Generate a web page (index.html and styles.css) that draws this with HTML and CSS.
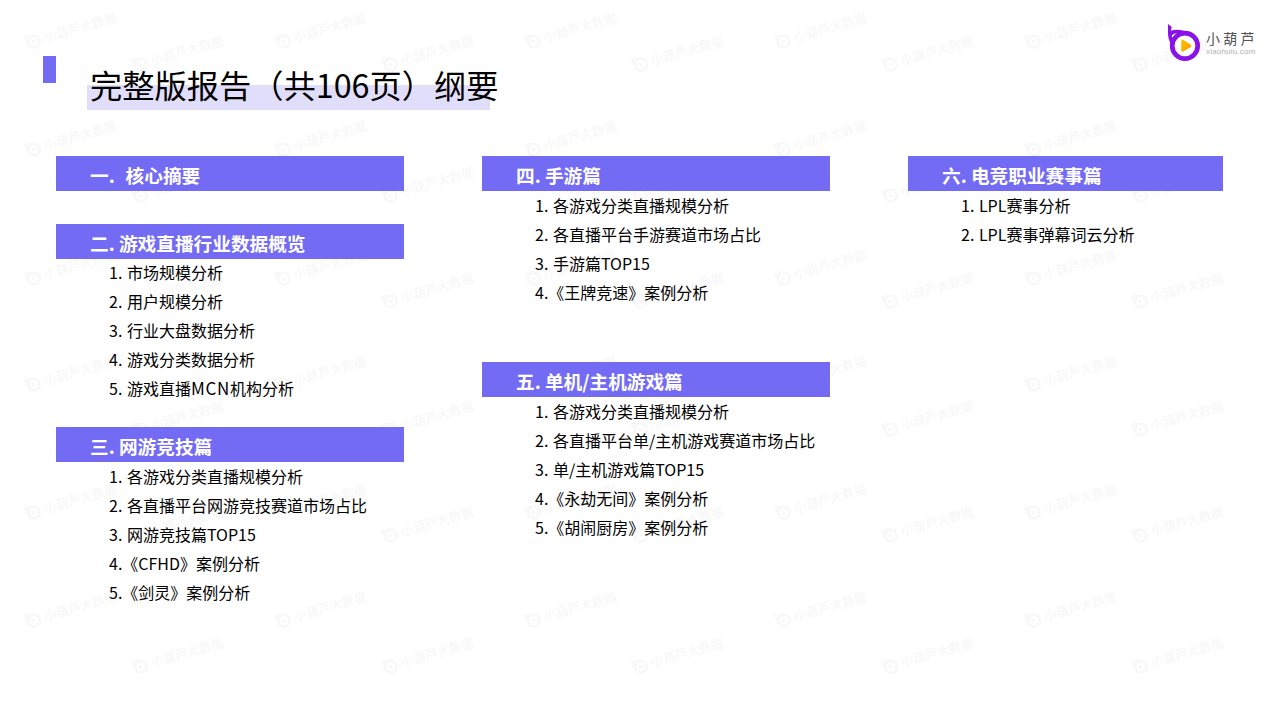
FILE: index.html
```html
<!DOCTYPE html>
<html lang="zh-CN">
<head>
<meta charset="utf-8">
<title>完整版报告纲要</title>
<link rel="stylesheet" href="styles.css">
</head>
<body>
<svg class="defs" width="0" height="0" aria-hidden="true">
  <symbol id="wm" viewBox="0 0 20 20">
    <path d="M2 2 L2.5 6 Q4 9 4.5 11" fill="none" stroke="currentColor" stroke-width="2.4"/>
    <path d="M2.5 4 Q6 2 10 4" fill="none" stroke="currentColor" stroke-width="2"/>
    <circle cx="10" cy="11" r="6.6" fill="none" stroke="currentColor" stroke-width="3"/>
    <path d="M8 8 L13 11 L8 14 Z" fill="currentColor"/>
  </symbol>
</svg>
<main class="page">
  <div class="wm-layer wm-a">
    <div class="wm"><svg class="wm-icon"><use href="#wm"/></svg><span>小葫芦大数据</span></div>
    <div class="wm"><svg class="wm-icon"><use href="#wm"/></svg><span>小葫芦大数据</span></div>
    <div class="wm"><svg class="wm-icon"><use href="#wm"/></svg><span>小葫芦大数据</span></div>
    <div class="wm"><svg class="wm-icon"><use href="#wm"/></svg><span>小葫芦大数据</span></div>
    <div class="wm"><svg class="wm-icon"><use href="#wm"/></svg><span>小葫芦大数据</span></div>
    <div class="wm"><svg class="wm-icon"><use href="#wm"/></svg><span>小葫芦大数据</span></div>
    <div class="wm"><svg class="wm-icon"><use href="#wm"/></svg><span>小葫芦大数据</span></div>
    <div class="wm"><svg class="wm-icon"><use href="#wm"/></svg><span>小葫芦大数据</span></div>
    <div class="wm"><svg class="wm-icon"><use href="#wm"/></svg><span>小葫芦大数据</span></div>
    <div class="wm"><svg class="wm-icon"><use href="#wm"/></svg><span>小葫芦大数据</span></div>
    <div class="wm"><svg class="wm-icon"><use href="#wm"/></svg><span>小葫芦大数据</span></div>
    <div class="wm"><svg class="wm-icon"><use href="#wm"/></svg><span>小葫芦大数据</span></div>
    <div class="wm"><svg class="wm-icon"><use href="#wm"/></svg><span>小葫芦大数据</span></div>
    <div class="wm"><svg class="wm-icon"><use href="#wm"/></svg><span>小葫芦大数据</span></div>
    <div class="wm"><svg class="wm-icon"><use href="#wm"/></svg><span>小葫芦大数据</span></div>
    <div class="wm"><svg class="wm-icon"><use href="#wm"/></svg><span>小葫芦大数据</span></div>
    <div class="wm"><svg class="wm-icon"><use href="#wm"/></svg><span>小葫芦大数据</span></div>
    <div class="wm"><svg class="wm-icon"><use href="#wm"/></svg><span>小葫芦大数据</span></div>
    <div class="wm"><svg class="wm-icon"><use href="#wm"/></svg><span>小葫芦大数据</span></div>
    <div class="wm"><svg class="wm-icon"><use href="#wm"/></svg><span>小葫芦大数据</span></div>
    <div class="wm"><svg class="wm-icon"><use href="#wm"/></svg><span>小葫芦大数据</span></div>
    <div class="wm"><svg class="wm-icon"><use href="#wm"/></svg><span>小葫芦大数据</span></div>
    <div class="wm"><svg class="wm-icon"><use href="#wm"/></svg><span>小葫芦大数据</span></div>
    <div class="wm"><svg class="wm-icon"><use href="#wm"/></svg><span>小葫芦大数据</span></div>
    <div class="wm"><svg class="wm-icon"><use href="#wm"/></svg><span>小葫芦大数据</span></div>
    <div class="wm"><svg class="wm-icon"><use href="#wm"/></svg><span>小葫芦大数据</span></div>
    <div class="wm"><svg class="wm-icon"><use href="#wm"/></svg><span>小葫芦大数据</span></div>
    <div class="wm"><svg class="wm-icon"><use href="#wm"/></svg><span>小葫芦大数据</span></div>
    <div class="wm"><svg class="wm-icon"><use href="#wm"/></svg><span>小葫芦大数据</span></div>
    <div class="wm"><svg class="wm-icon"><use href="#wm"/></svg><span>小葫芦大数据</span></div>
  </div>
  <div class="wm-layer wm-b">
    <div class="wm"><svg class="wm-icon"><use href="#wm"/></svg><span>小葫芦大数据</span></div>
    <div class="wm"><svg class="wm-icon"><use href="#wm"/></svg><span>小葫芦大数据</span></div>
    <div class="wm"><svg class="wm-icon"><use href="#wm"/></svg><span>小葫芦大数据</span></div>
    <div class="wm"><svg class="wm-icon"><use href="#wm"/></svg><span>小葫芦大数据</span></div>
    <div class="wm"><svg class="wm-icon"><use href="#wm"/></svg><span>小葫芦大数据</span></div>
    <div class="wm"><svg class="wm-icon"><use href="#wm"/></svg><span>小葫芦大数据</span></div>
    <div class="wm"><svg class="wm-icon"><use href="#wm"/></svg><span>小葫芦大数据</span></div>
    <div class="wm"><svg class="wm-icon"><use href="#wm"/></svg><span>小葫芦大数据</span></div>
    <div class="wm"><svg class="wm-icon"><use href="#wm"/></svg><span>小葫芦大数据</span></div>
    <div class="wm"><svg class="wm-icon"><use href="#wm"/></svg><span>小葫芦大数据</span></div>
    <div class="wm"><svg class="wm-icon"><use href="#wm"/></svg><span>小葫芦大数据</span></div>
    <div class="wm"><svg class="wm-icon"><use href="#wm"/></svg><span>小葫芦大数据</span></div>
    <div class="wm"><svg class="wm-icon"><use href="#wm"/></svg><span>小葫芦大数据</span></div>
    <div class="wm"><svg class="wm-icon"><use href="#wm"/></svg><span>小葫芦大数据</span></div>
    <div class="wm"><svg class="wm-icon"><use href="#wm"/></svg><span>小葫芦大数据</span></div>
    <div class="wm"><svg class="wm-icon"><use href="#wm"/></svg><span>小葫芦大数据</span></div>
    <div class="wm"><svg class="wm-icon"><use href="#wm"/></svg><span>小葫芦大数据</span></div>
    <div class="wm"><svg class="wm-icon"><use href="#wm"/></svg><span>小葫芦大数据</span></div>
    <div class="wm"><svg class="wm-icon"><use href="#wm"/></svg><span>小葫芦大数据</span></div>
    <div class="wm"><svg class="wm-icon"><use href="#wm"/></svg><span>小葫芦大数据</span></div>
    <div class="wm"><svg class="wm-icon"><use href="#wm"/></svg><span>小葫芦大数据</span></div>
    <div class="wm"><svg class="wm-icon"><use href="#wm"/></svg><span>小葫芦大数据</span></div>
    <div class="wm"><svg class="wm-icon"><use href="#wm"/></svg><span>小葫芦大数据</span></div>
    <div class="wm"><svg class="wm-icon"><use href="#wm"/></svg><span>小葫芦大数据</span></div>
    <div class="wm"><svg class="wm-icon"><use href="#wm"/></svg><span>小葫芦大数据</span></div>
    <div class="wm"><svg class="wm-icon"><use href="#wm"/></svg><span>小葫芦大数据</span></div>
    <div class="wm"><svg class="wm-icon"><use href="#wm"/></svg><span>小葫芦大数据</span></div>
    <div class="wm"><svg class="wm-icon"><use href="#wm"/></svg><span>小葫芦大数据</span></div>
    <div class="wm"><svg class="wm-icon"><use href="#wm"/></svg><span>小葫芦大数据</span></div>
    <div class="wm"><svg class="wm-icon"><use href="#wm"/></svg><span>小葫芦大数据</span></div>
  </div>

  <header class="header">
    <div class="accent"></div>
    <h1 class="title">完整版报告（共106页）纲要</h1>
    <div class="logo">
      <svg class="logo-icon" viewBox="0 0 36 42" aria-hidden="true">
        <defs>
          <linearGradient id="play" x1="0" y1="0" x2="1" y2="1">
            <stop offset="0" stop-color="#ffc400"/>
            <stop offset="1" stop-color="#ff9a00"/>
          </linearGradient>
        </defs>
        <path d="M1 1 L5 4 L4 8 Q10 6 18 8 L17 10 Q9 10 5 13 Q5 17 8 20 L4.500 23 Q1 17 1 10 Z" fill="#8a12e6"/>
        <circle cx="19" cy="24" r="13.500" fill="none" stroke="#8a12e6" stroke-width="5"/>
        <path d="M15 18.500 Q15 16.500 17 17.500 L25 22.500 Q26.500 24 25 25.500 L17 30 Q15 31 15 29 Z" fill="url(#play)"/>
      </svg>
      <div class="logo-text">
        <div class="logo-name">小葫芦</div>
        <div class="logo-url">xiaohulu.com</div>
      </div>
    </div>
  </header>

  <div class="columns">
    <div class="col col-wide">
      <section class="sec gap-33">
        <h2 class="bar bar-loose">一.&nbsp;&nbsp;核心摘要</h2>
      </section>
      <section class="sec gap-24">
        <h2 class="bar">二. 游戏直播行业数据概览</h2>
        <ul class="list list-up">
          <li>1. 市场规模分析</li>
          <li>2. 用户规模分析</li>
          <li>3. 行业大盘数据分析</li>
          <li>4. 游戏分类数据分析</li>
          <li>5. 游戏直播<span class="latin-wide">MCN</span>机构分析</li>
        </ul>
      </section>
      <section class="sec">
        <h2 class="bar">三. 网游竞技篇</h2>
        <ul class="list">
          <li>1. 各游戏分类直播规模分析</li>
          <li>2. 各直播平台网游竞技赛道市场占比</li>
          <li>3. 网游竞技篇TOP15</li>
          <li>4.《CFHD》案例分析</li>
          <li>5.《剑灵》案例分析</li>
        </ul>
      </section>
    </div>
    <div class="col col-wide">
      <section class="sec gap-56">
        <h2 class="bar">四. 手游篇</h2>
        <ul class="list">
          <li>1. 各游戏分类直播规模分析</li>
          <li>2. 各直播平台手游赛道市场占比</li>
          <li>3. 手游篇TOP15</li>
          <li>4.《王牌竞速》案例分析</li>
        </ul>
      </section>
      <section class="sec">
        <h2 class="bar">五. 单机/主机游戏篇</h2>
        <ul class="list">
          <li>1. 各游戏分类直播规模分析</li>
          <li>2. 各直播平台单/主机游戏赛道市场占比</li>
          <li>3. 单/主机游戏篇TOP15</li>
          <li>4.《永劫无间》案例分析</li>
          <li>5.《胡闹厨房》案例分析</li>
        </ul>
      </section>
    </div>
    <div class="col col-narrow">
      <section class="sec">
        <h2 class="bar">六. 电竞职业赛事篇</h2>
        <ul class="list">
          <li>1. LPL赛事分析</li>
          <li>2. LPL赛事弹幕词云分析</li>
        </ul>
      </section>
    </div>
  </div>
</main>
</body>
</html>
```
FILE: styles.css
```css
* { box-sizing: border-box; }
html, body { margin: 0; padding: 0; background: #fff; }
body { font-family: "Noto Sans CJK SC", "Noto Sans", sans-serif; color: #000; }
.defs { position: absolute; }
.page { position: relative; width: 1280px; height: 720px; overflow: hidden; }

/* watermark */
.wm-layer {
  position: absolute;
  display: grid;
  grid-template-columns: repeat(5, 250px);
  color: #f8f8f8;
}
.wm-a { left: 23px; top: 20px; grid-template-rows: 108px 129px 106px 128px 108px 20px; }
.wm-b { left: 130px; top: 43px; grid-template-rows: 131px 106px 128px 106px 131px 20px; }
.wm {
  display: flex;
  align-items: center;
  gap: 2px;
  width: 96px;
  height: 20px;
  font-size: 12.5px;
  font-weight: 700;
  line-height: 20px;
  white-space: nowrap;
  transform: rotate(-16deg);
  filter: blur(0.5px);
}
.wm-icon { width: 18px; height: 18px; flex: none; }

/* header */
.header {
  position: relative;
  display: flex;
  align-items: flex-start;
  height: 156px;
  padding: 23px 22px 0 43px;
}
.accent { width: 13px; height: 27px; margin-top: 33px; background: #736bf4; }
.title {
  width: 403px;
  height: 45px;
  margin: 42px 0 0 31px;
  padding-left: 3px;
  font-size: 32.25px;
  font-weight: 400;
  line-height: 38px;
  white-space: nowrap;
  background: linear-gradient(to bottom, transparent 20px, #e0defb 20px);
}
.logo { display: flex; margin-left: auto; align-items: flex-start; }
.logo-icon { width: 34px; height: 40px; flex: none; }
.logo-text { width: 52px; margin: 7px 0 0 5px; }
.logo-name { font-size: 14px; line-height: 16px; letter-spacing: 3.2px; color: #555; white-space: nowrap; }
.logo-url { font-family: "Liberation Sans", sans-serif; font-size: 8px; line-height: 10px; margin-top: 1px; letter-spacing: 0.2px; color: #b0b0b0; white-space: nowrap; }

/* columns */
.columns { position: relative; display: flex; gap: 78px; padding-left: 56px; }
.col-wide { width: 348px; }
.col-narrow { width: 315px; }
.gap-33 { margin-bottom: 33px; }
.gap-24 { margin-bottom: 24px; }
.gap-56 { margin-bottom: 55.6px; }
.bar {
  height: 35px;
  margin: 0;
  padding: 1px 0 0 34px;
  font-size: 18.67px;
  font-weight: 700;
  line-height: 35px;
  color: #fff;
  background: #736bf4;
}
.bar-loose { word-spacing: 1.2px; }
.list { margin: -0.4px 0 0; padding: 0 0 0 53px; list-style: none; }
.list-up { margin-top: -1px; }
.list li { font-size: 16px; line-height: 29px; word-spacing: 1px; white-space: nowrap; }
.latin-wide { font-size: 17px; line-height: 0; letter-spacing: 0.7px; }
```
